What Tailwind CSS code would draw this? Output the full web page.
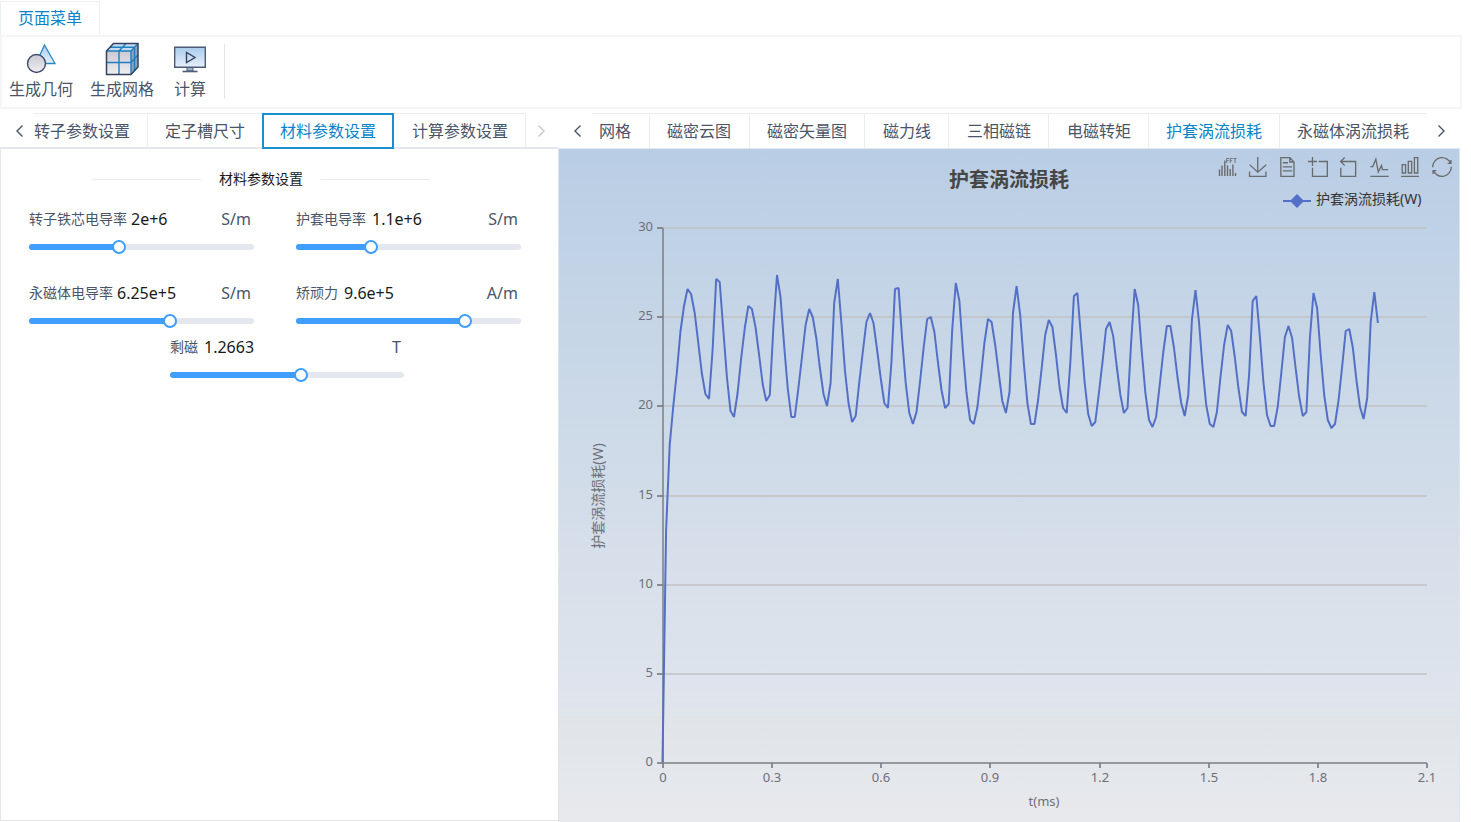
<!DOCTYPE html>
<html lang="zh-CN">
<head>
<meta charset="utf-8">
<meta name="viewport" content="width=device-width, initial-scale=1">
<title>材料参数设置</title>
<script src="https://cdn.jsdelivr.net/npm/@tailwindcss/browser@4"></script>
</head>
<body class="flex min-h-screen flex-col overflow-x-hidden bg-white pr-[9px] font-['Noto_Sans','Noto_Sans_CJK_SC',sans-serif] text-base text-[#4a5568]">

<header>
  <nav class="flex pt-px">
    <a href="#" class="flex h-[34px] items-center border border-b-0 border-[#eeeff2] px-[17px] pb-0.5 text-[#0a84c8]">页面菜单</a>
  </nav>
  <div class="flex h-[74px] border-2 border-[#f5f5f7] pl-[7px] pt-[5px]">
    <button type="button" class="flex w-16 flex-col items-center">
      <svg class="h-[35px] w-9" viewBox="0 0 36 35">
        <defs>
          <linearGradient id="gray" x1="0" y1="0" x2="0" y2="1"><stop offset="0" stop-color="#c9cad3"/><stop offset="1" stop-color="#eeeef2"/></linearGradient>
          <linearGradient id="blue" x1="0" y1="0" x2="0" y2="1"><stop offset="0" stop-color="#a9ccec"/><stop offset="1" stop-color="#e6f0fa"/></linearGradient>
        </defs>
        <path d="M21.5 3 32 21.500H13z" fill="url(#blue)" stroke="#2c86c2" stroke-width="1.300"/>
        <circle cx="13.500" cy="21.500" r="9" fill="url(#gray)" stroke="#3f4a66" stroke-width="1.400"/>
      </svg>
      <span class="whitespace-nowrap leading-6">生成几何</span>
    </button>
    <button type="button" class="ml-[17px] flex w-16 flex-col items-center">
      <svg class="h-[35px] w-9" viewBox="0 0 36 35">
        <path d="M2.500 9 9.500 1.500H34L27 9z" fill="#c5dcf2"/>
        <path d="M2.500 9H27V32.500H2.500z" fill="url(#gray)"/>
        <path d="M27 9 34 1.500V25L27 32.500z" fill="#8ba2c0"/>
        <path d="M2.500 9H27V32.500M27 9 34 1.500M15 32.500V9l7-7.500M2.500 20.500H27L34 13M6 5.300H30.500V29" fill="none" stroke="#1f7fc0" stroke-width="1.400"/>
        <path d="M2.500 9 9.500 1.500H34V25L27 32.500H2.500z" fill="none" stroke="#35425f" stroke-width="1.500"/>
      </svg>
      <span class="whitespace-nowrap leading-6">生成网格</span>
    </button>
    <button type="button" class="ml-5 flex w-8 flex-col items-center">
      <svg class="h-[35px] w-9" viewBox="0 0 36 35">
        <path d="M15 25h6v4h-6z" fill="#9fb0c6" stroke="#4b5b78"/>
        <path d="M10.500 29.500h15" stroke="#4b5b78" stroke-width="1.600"/>
        <path d="M2.700 5.200h30.600v20H2.700z" fill="url(#blue)" stroke="#4b5b78" stroke-width="1.400"/>
        <path d="M14.500 10.500v10l8.500-5z" fill="none" stroke="#35425f" stroke-width="1.400"/>
      </svg>
      <span class="whitespace-nowrap leading-6">计算</span>
    </button>
    <div class="ml-[18px] mt-[2px] h-[55px] border-l border-[#e2e5ec]"></div>
  </div>
</header>

<main class="mt-1 grid flex-1 grid-cols-[558fr_904fr]">
  <section class="flex min-w-0 flex-col">
    <div class="flex h-9 border-b-2 border-[#e4e7ed] whitespace-nowrap">
      <button type="button" aria-label="向左" class="flex w-[34px] shrink-0 items-center justify-center pl-1.5 pt-px">
        <svg class="h-3.5 w-3.5" viewBox="0 0 14 14" fill="none" stroke="#4a5568" stroke-width="1.400"><path d="M9.500 1.500 4 7l5.500 5.500"/></svg>
      </button>
      <div role="tablist" class="-mb-[2px] flex items-stretch">
        <button role="tab" type="button" class="mb-[2px] border-r border-t border-[#eaecf0] pr-[17px]">转子参数设置</button>
        <button role="tab" type="button" class="mb-[2px] border-t border-[#eaecf0] px-[17px]">定子槽尺寸</button>
        <button role="tab" type="button" aria-selected="true" class="border-2 border-[#1a8fd0] px-4 text-[#0a84c8]">材料参数设置</button>
        <button role="tab" type="button" class="mb-[2px] border-r border-t border-[#eaecf0] pl-[18px] pr-[17px]">计算参数设置</button>
      </div>
      <button type="button" aria-label="向右" disabled class="flex w-[30px] shrink-0 items-center justify-center pt-px">
        <svg class="h-3.5 w-3.5" viewBox="0 0 14 14" fill="none" stroke="#c3c7cf" stroke-width="1.400"><path d="M4.500 1.500 10 7l-5.500 5.500"/></svg>
      </button>
    </div>

    <form class="mb-px flex-1 border-b border-l border-[#e4e7ed] pl-7 pr-[37px] pt-[18px]">
      <h2 class="mx-[63px] flex items-center gap-[18px] pr-7 text-sm leading-6 text-[#1a1a1a] before:h-px before:flex-1 before:bg-[#e8eaf0] after:h-px after:flex-1 after:bg-[#e8eaf0]">材料参数设置</h2>

      <div class="mt-4 grid grid-cols-2 gap-x-[42px] gap-y-[18px]">
        <div>
          <div class="flex items-center gap-1 pr-[3px] leading-6"><label for="p1" class="text-sm leading-6">转子铁芯电导率</label><output for="p1" class="flex-1 text-[#1a1a1a]">2e+6</output><span>S/m</span></div>
          <div class="relative my-[13px] h-1.5 rounded-full bg-[#e4e7ed]">
            <div class="h-full rounded-full bg-[#409eff]" style="width:40%"></div>
            <input id="p1" type="range" min="0" max="100" step="0.1" value="40" class="absolute -left-[7px] -top-1 h-3.5 w-[calc(100%+14px)] appearance-none bg-transparent [&::-webkit-slider-thumb]:h-3.5 [&::-webkit-slider-thumb]:w-3.5 [&::-webkit-slider-thumb]:appearance-none [&::-webkit-slider-thumb]:rounded-full [&::-webkit-slider-thumb]:border-2 [&::-webkit-slider-thumb]:border-solid [&::-webkit-slider-thumb]:border-[#409eff] [&::-webkit-slider-thumb]:bg-white">
          </div>
        </div>
        <div>
          <div class="flex items-center gap-1.5 pr-[3px] leading-6"><label for="p2" class="text-sm leading-6">护套电导率</label><output for="p2" class="flex-1 text-[#1a1a1a]">1.1e+6</output><span>S/m</span></div>
          <div class="relative my-[13px] h-1.5 rounded-full bg-[#e4e7ed]">
            <div class="h-full rounded-full bg-[#409eff]" style="width:33.300%"></div>
            <input id="p2" type="range" min="0" max="100" step="0.1" value="33.3" class="absolute -left-[7px] -top-1 h-3.5 w-[calc(100%+14px)] appearance-none bg-transparent [&::-webkit-slider-thumb]:h-3.5 [&::-webkit-slider-thumb]:w-3.5 [&::-webkit-slider-thumb]:appearance-none [&::-webkit-slider-thumb]:rounded-full [&::-webkit-slider-thumb]:border-2 [&::-webkit-slider-thumb]:border-solid [&::-webkit-slider-thumb]:border-[#409eff] [&::-webkit-slider-thumb]:bg-white">
          </div>
        </div>
        <div>
          <div class="flex items-center gap-1 pr-[3px] leading-6"><label for="p3" class="text-sm leading-6">永磁体电导率</label><output for="p3" class="flex-1 text-[#1a1a1a]">6.25e+5</output><span>S/m</span></div>
          <div class="relative my-[13px] h-1.5 rounded-full bg-[#e4e7ed]">
            <div class="h-full rounded-full bg-[#409eff]" style="width:62.500%"></div>
            <input id="p3" type="range" min="0" max="100" step="0.1" value="62.5" class="absolute -left-[7px] -top-1 h-3.5 w-[calc(100%+14px)] appearance-none bg-transparent [&::-webkit-slider-thumb]:h-3.5 [&::-webkit-slider-thumb]:w-3.5 [&::-webkit-slider-thumb]:appearance-none [&::-webkit-slider-thumb]:rounded-full [&::-webkit-slider-thumb]:border-2 [&::-webkit-slider-thumb]:border-solid [&::-webkit-slider-thumb]:border-[#409eff] [&::-webkit-slider-thumb]:bg-white">
          </div>
        </div>
        <div>
          <div class="flex items-center gap-1.5 pr-[3px] leading-6"><label for="p4" class="text-sm leading-6">矫顽力</label><output for="p4" class="flex-1 text-[#1a1a1a]">9.6e+5</output><span>A/m</span></div>
          <div class="relative my-[13px] h-1.5 rounded-full bg-[#e4e7ed]">
            <div class="h-full rounded-full bg-[#409eff]" style="width:75%"></div>
            <input id="p4" type="range" min="0" max="100" step="0.1" value="75" class="absolute -left-[7px] -top-1 h-3.5 w-[calc(100%+14px)] appearance-none bg-transparent [&::-webkit-slider-thumb]:h-3.5 [&::-webkit-slider-thumb]:w-3.5 [&::-webkit-slider-thumb]:appearance-none [&::-webkit-slider-thumb]:rounded-full [&::-webkit-slider-thumb]:border-2 [&::-webkit-slider-thumb]:border-solid [&::-webkit-slider-thumb]:border-[#409eff] [&::-webkit-slider-thumb]:bg-white">
          </div>
        </div>
      </div>
      <div class="-mt-0.5 ml-[141px] mr-[117px]">
        <div class="flex items-center gap-1.5 pr-[3px] leading-6"><label for="p5" class="text-sm leading-6">剩磁</label><output for="p5" class="flex-1 text-[#1a1a1a]">1.2663</output><span>T</span></div>
        <div class="relative my-[13px] h-1.5 rounded-full bg-[#e4e7ed]">
          <div class="h-full rounded-full bg-[#409eff]" style="width:55.800%"></div>
          <input id="p5" type="range" min="0" max="100" step="0.1" value="55.8" class="absolute -left-[7px] -top-1 h-3.5 w-[calc(100%+14px)] appearance-none bg-transparent [&::-webkit-slider-thumb]:h-3.5 [&::-webkit-slider-thumb]:w-3.5 [&::-webkit-slider-thumb]:appearance-none [&::-webkit-slider-thumb]:rounded-full [&::-webkit-slider-thumb]:border-2 [&::-webkit-slider-thumb]:border-solid [&::-webkit-slider-thumb]:border-[#409eff] [&::-webkit-slider-thumb]:bg-white">
        </div>
      </div>
    </form>
  </section>

  <section class="mr-[2px] flex min-w-0 flex-col">
    <div class="flex h-9 border-b border-[#e4e7ed] whitespace-nowrap">
      <button type="button" aria-label="向左" class="flex w-[34px] shrink-0 items-center justify-center pl-1.5 pt-px">
        <svg class="h-3.5 w-3.5" viewBox="0 0 14 14" fill="none" stroke="#4a5568" stroke-width="1.400"><path d="M9.500 1.500 4 7l5.500 5.500"/></svg>
      </button>
      <div role="tablist" class="flex min-w-0 flex-1 overflow-hidden border-t border-[#eaecf0]">
        <button role="tab" type="button" class="shrink-0 border-r border-[#eaecf0] pl-[7px] pr-[18px]">网格</button>
        <button role="tab" type="button" class="shrink-0 border-r border-[#eaecf0] pl-[17px] pr-[18px]">磁密云图</button>
        <button role="tab" type="button" class="shrink-0 border-r border-[#eaecf0] px-[17px]">磁密矢量图</button>
        <button role="tab" type="button" class="shrink-0 border-r border-[#eaecf0] pl-[18px] pr-[17px]">磁力线</button>
        <button role="tab" type="button" class="shrink-0 border-r border-[#eaecf0] pl-[18px] pr-[17px]">三相磁链</button>
        <button role="tab" type="button" class="shrink-0 border-r border-[#eaecf0] pl-[18px] pr-[17px]">电磁转矩</button>
        <button role="tab" type="button" aria-selected="true" class="shrink-0 border-r border-[#eaecf0] px-[17px] text-[#0a84c8]">护套涡流损耗</button>
        <button role="tab" type="button" class="shrink-0 px-[17px]">永磁体涡流损耗</button>
      </div>
      <button type="button" aria-label="向右" class="flex w-[34px] shrink-0 items-center justify-center pr-1 pt-px">
        <svg class="h-3.5 w-3.5" viewBox="0 0 14 14" fill="none" stroke="#4a5568" stroke-width="1.400"><path d="M4.500 1.500 10 7l-5.500 5.500"/></svg>
      </button>
    </div>

    <div class="relative flex-1 border-l border-r border-[#dfe4ec] bg-[linear-gradient(#b9cde5,#c3d4e6_20%,#cddae8_42%,#dae1eb_68%,#dfe4ed_82%,#e1e5e9_86%,#e7e9ed)]">
      <svg id="chart" class="block h-auto w-full" viewBox="559 149 900 673" font-size="13" fill="#6e7079">
        <text x="1009" y="187" text-anchor="middle" font-size="20" font-weight="700" fill="#464646">护套涡流损耗</text>
        <path d="M1283 201h28" stroke="#5470c6" stroke-width="2"/>
        <path d="M1297 194l7 7-7 7-7-7z" fill="#5470c6"/>
        <text x="1316" y="204" font-size="14" fill="#333">护套涡流损耗(W)</text>
        <text transform="translate(603 496) rotate(-90)" text-anchor="middle" font-size="14">护套涡流损耗(W)</text>
        <text x="1044" y="806" text-anchor="middle">t(ms)</text>
        <g id="axes"></g>
        <polyline id="series" fill="none" stroke="#5470c6" stroke-width="2" stroke-linejoin="bevel"/>
      </svg>
      <div class="absolute right-[7px] top-2 flex w-[235px] justify-between text-[#6a6c6f]">
        <button type="button" aria-label="FFT" class="h-5 w-5"><svg class="h-5 w-5 overflow-visible" viewBox="0 0 20 20" fill="none" stroke="currentColor"><path d="M2.500 12.500V19M5 8.500V19M7.800 3.500V19M10.500 8.500V19M13.200 12V19M15.900 7.500V19M18.500 16v3" stroke-width="1.400"/><path d="M9.700 6V1.500h2.500M9.700 3.700h2M13.200 6V1.500h2.500M13.200 3.700h2M16.400 1.500h3.200M18 1.500V6" stroke-width=".9"/></svg></button>
        <button type="button" aria-label="保存为图片" class="h-5 w-5"><svg class="h-5 w-5 overflow-visible" viewBox="0 0 60 60" fill="none" stroke="currentColor" stroke-width="4"><path d="M4.700,22.900L29.300,45.500L54.700,23.400M4.600,43.600L4.600,58L53.800,58L53.800,43.600M29.200,45.100L29.200,0"/></svg></button>
        <button type="button" aria-label="数据视图" class="h-5 w-5"><svg class="h-5 w-5 overflow-visible" viewBox="3 0 60 60" fill="none" stroke="currentColor" stroke-width="4"><path d="M17.500,17.300H33M45.400,29.500h-28M11.500,2v56H51V14.800L38.400,2H11.500zM38.400,2.200v12.700H51M45.400,41.700h-28"/></svg></button>
        <button type="button" aria-label="区域缩放" class="h-5 w-5"><svg class="h-5 w-5 overflow-visible" viewBox="3 0 60 60" fill="none" stroke="currentColor" stroke-width="4"><path d="M0,13.500h26.900M13.500,26.900V0M32.100,13.500H58V58H13.500V32.100"/></svg></button>
        <button type="button" aria-label="缩放还原" class="h-5 w-5"><svg class="h-5 w-5 overflow-visible" viewBox="8 0 60 60" fill="none" stroke="currentColor" stroke-width="4"><path d="M22,1.400L9.900,13.500l12.300,12.300M10.300,13.500H54.900v44.600H10.300v-26"/></svg></button>
        <button type="button" aria-label="折线图" class="h-5 w-5"><svg class="h-5 w-5 overflow-visible" viewBox="6 0 60 60" fill="none" stroke="currentColor" stroke-width="4"><path d="M4.100,28.900h7.100l9.300-22l7.400,38l9.700-19.700l3,12.800h17M4.100,58h55"/></svg></button>
        <button type="button" aria-label="柱状图" class="h-5 w-5"><svg class="h-5 w-5 overflow-visible" viewBox="3 0 60 60" fill="none" stroke="currentColor" stroke-width="4"><path d="M6.700,22.900h10V48h-10V22.900zM24.900,13h10v35h-10V13zM43.200,2h10v46h-10V2zM3.100,58h53.700"/></svg></button>
        <button type="button" aria-label="还原" class="h-5 w-5"><svg class="h-5 w-5 overflow-visible" viewBox="0 0 60 60" fill="none" stroke="currentColor" stroke-width="4"><path d="M47,18.900h9.800V8.700M56.300,20.100C52.100,9,40.500,0.600,26.800,2.100C12.600,3.700,1.600,16.200,2.100,30.600M13,41.100H3.100v10.200M3.700,39.900c4.200,11.100,15.800,19.500,29.500,18c14.200-1.600,25.200-14.100,24.700-28.500"/></svg></button>
      </div>
    </div>
  </section>
</main>

<script>
const left = 663, right = 1427, top0 = 228, bottom = 763;
let axes = '';
for (let i = 0; i <= 6; i++) {
  const y = Math.round(bottom - (bottom - top0) * i / 6);
  if (i) axes += `<path d="M${left} ${y}H${right}" stroke="#bfc2c3" stroke-width="1.500"/>`;
  axes += `<path d="M${left - 6} ${y}h6" stroke="#6e7079" stroke-width="1.500"/><text x="${left - 10}" y="${y + 3}" text-anchor="end">${i * 5}</text>`;
}
for (let i = 0; i <= 7; i++) {
  const x = Math.round(left + (right - left) * i / 7);
  axes += `<path d="M${x} ${bottom}v5" stroke="#6e7079" stroke-width="1.500"/><text x="${x}" y="782" text-anchor="middle">${i ? (i * 0.3).toFixed(1) : 0}</text>`;
}
axes += `<path d="M${left} ${top0}V${bottom}H${right}" fill="none" stroke="#7b7f87" stroke-width="1.500"/>`;
document.getElementById('axes').innerHTML = axes;

// One vertical position per time step
const ys = [762,530,445,407,373,332,306,289,294,313,343,373,394,399,350,279,282,330,377,411,417,393,358,328,306,309,327,355,384,401,
395,327,275,297,345,388,417,417,388,357,325,309,317,338,368,394,406,383,303,279,323,370,403,422,416,383,352,322,313,323,350,378,403,408,
363,289,288,340,383,413,424,412,382,348,319,317,332,362,390,408,404,330,283,301,352,393,420,424,408,377,343,319,322,345,373,401,413,392,
313,286,315,363,403,424,424,400,368,335,320,327,355,387,408,413,363,296,293,337,382,414,426,422,393,362,329,322,336,367,395,413,408,343,
289,305,352,393,420,427,417,385,352,326,326,348,378,403,416,395,320,290,322,368,405,424,427,412,377,345,325,331,357,388,412,416,375,301,
296,337,382,415,426,426,407,373,337,326,338,368,397,416,412,338,293,308,355,395,420,428,424,400,367,331,329,348,380,407,419,398,322,292,323];
document.getElementById('series').setAttribute('points', ys.map((y, i) => (662.5 + 3.577 * i).toFixed(1) + ',' + y).join(' '));

document.querySelectorAll('input[type=range]').forEach(el => el.addEventListener('input', () => {
  el.previousElementSibling.style.width = el.value + '%';
}));
</script>
</body>
</html>
